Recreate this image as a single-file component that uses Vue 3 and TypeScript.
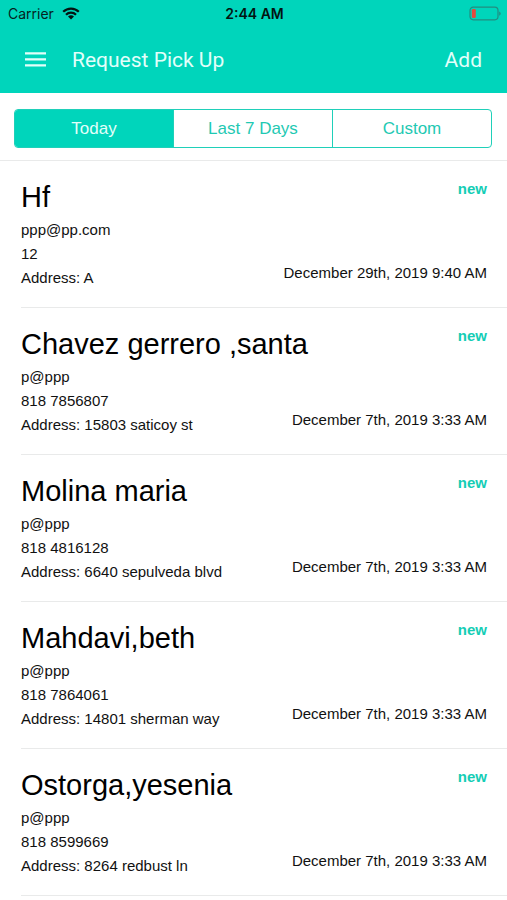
<script setup lang="ts">
import { ref } from 'vue'

interface PickUp {
  name: string
  email: string
  phone: string
  address: string
  date: string
  status: string
}

const tabs: string[] = ['Today', 'Last 7 Days', 'Custom']
const activeTab = ref<string>('Today')

const pickUps: PickUp[] = [
  { name: 'Hf', email: 'ppp@pp.com', phone: '12', address: 'A', date: 'December 29th, 2019 9:40 AM', status: 'new' },
  { name: 'Chavez gerrero ,santa', email: 'p@ppp', phone: '818 7856807', address: '15803 saticoy st', date: 'December 7th, 2019 3:33 AM', status: 'new' },
  { name: 'Molina maria', email: 'p@ppp', phone: '818 4816128', address: '6640 sepulveda blvd', date: 'December 7th, 2019 3:33 AM', status: 'new' },
  { name: 'Mahdavi,beth', email: 'p@ppp', phone: '818 7864061', address: '14801 sherman way', date: 'December 7th, 2019 3:33 AM', status: 'new' },
  { name: 'Ostorga,yesenia', email: 'p@ppp', phone: '818 8599669', address: '8264 redbust ln', date: 'December 7th, 2019 3:33 AM', status: 'new' },
]
</script>

<template>
  <div class="screen">
    <header class="header">
      <div class="status-bar">
        <div class="carrier">
          <span>Carrier</span>
          <svg class="wifi" width="18" height="13" viewBox="0 0 18 13" aria-hidden="true">
            <g fill="none" stroke="currentColor" stroke-width="2.2">
              <path d="M1.2 4.8a11 11 0 0 1 15.6 0" />
              <path d="M4 7.8a7 7 0 0 1 10 0" />
            </g>
            <path d="M9 12.6 6 9.6a4.3 4.3 0 0 1 6 0z" fill="currentColor" />
          </svg>
        </div>
        <span class="time">2:44 AM</span>
        <div class="battery">
          <svg width="33" height="16" viewBox="0 0 33 16" aria-hidden="true">
            <rect x="2" y="1.2" width="28" height="12.6" rx="3.2" fill="none" stroke="#228d80" stroke-width="1.2" />
            <path d="M31.2 5.4c2 .8 2 3.6 0 4.4z" fill="#228d80" />
            <rect x="3.8" y="3" width="4" height="9" rx="1.2" fill="#e5493d" />
          </svg>
        </div>
      </div>
      <div class="toolbar">
        <button class="menu" type="button" aria-label="Menu">
          <svg width="21" height="16" viewBox="0 0 21 16" aria-hidden="true">
            <path d="M0 1.4h21M0 7.4h21M0 13.4h21" stroke="currentColor" stroke-width="2.4" />
          </svg>
        </button>
        <h1 class="title">Request Pick Up</h1>
        <button class="add" type="button">Add</button>
      </div>
    </header>

    <nav class="filter">
      <div class="segments">
        <button
          v-for="tab in tabs"
          :key="tab"
          type="button"
          class="segment"
          :class="{ active: tab === activeTab }"
          :aria-pressed="tab === activeTab"
          @click="activeTab = tab"
        >{{ tab }}</button>
      </div>
    </nav>

    <ul class="list">
      <li v-for="item in pickUps" :key="item.name" class="row">
        <div class="line">
          <h2 class="name">{{ item.name }}</h2>
          <span class="badge">{{ item.status }}</span>
        </div>
        <div class="line">
          <div class="contact">
            <p>{{ item.email }}</p>
            <p>{{ item.phone }}</p>
            <p>Address: {{ item.address }}</p>
          </div>
          <span class="date">{{ item.date }}</span>
        </div>
      </li>
    </ul>
  </div>
</template>

<style>
body {
  margin: 0;
  background: #fff;
}
</style>

<style scoped>
.screen {
  font-family: "Liberation Sans", Arial, sans-serif;
  color: #111;
}

button {
  margin: 0;
  padding: 0;
  border: 0;
  background: none;
  color: inherit;
  font: inherit;
  cursor: pointer;
}

.header {
  background: #00d5bb;
  font-family: Roboto, sans-serif;
}

.status-bar {
  display: grid;
  grid-template-columns: 1fr auto 1fr;
  align-items: center;
  height: 27px;
  padding: 0 6px 0 8px;
  color: #06231f;
  font-family: Inter, sans-serif;
  font-size: 14px;
}

.carrier {
  display: flex;
  align-items: center;
  gap: 8px;
}

.wifi {
  color: #031412;
}

.time {
  color: #031412;
  font-weight: 600;
}

.battery {
  display: flex;
  justify-content: flex-end;
}

.toolbar {
  display: flex;
  align-items: center;
  height: 66px;
  padding: 0 25px;
  color: #e2fffa;
}

.menu {
  display: flex;
}

.title {
  flex: 1;
  margin: 0 0 0 26px;
  font-size: 21px;
  font-weight: 400;
}

.add {
  font-size: 21px;
}

.filter {
  padding: 16px 15px 12px 14px;
  border-bottom: 1px solid #e9eaea;
}

.segments {
  display: flex;
  height: 39px;
  box-sizing: border-box;
  border: 1px solid #1fd0b9;
  border-radius: 4px;
  overflow: hidden;
}

.segment {
  flex: 1;
  color: #1fc9b3;
  font-size: 17px;
}

.segment + .segment {
  border-left: 1px solid #1fd0b9;
}

.segment.active {
  background: #00d5bb;
  color: #e2fffa;
}

.list {
  margin: 0;
  padding: 0 0 0 21px;
  list-style: none;
}

.row {
  display: flex;
  flex-direction: column;
  gap: 3px;
  padding: 19px 20px 17px 0;
  border-bottom: 1px solid #e9eaea;
}

.line {
  display: flex;
  justify-content: space-between;
  gap: 12px;
}

.name {
  margin: 0;
  color: #000;
  font-size: 29px;
  font-weight: 400;
  line-height: 35px;
}

p {
  margin: 0;
  font-size: 15px;
  line-height: 24px;
}

.date {
  align-self: flex-end;
  padding-bottom: 5px;
  font-size: 15px;
  line-height: 24px;
}

.badge {
  color: #14cdb5;
  font-size: 15px;
  font-weight: 700;
  line-height: 18px;
}
</style>
